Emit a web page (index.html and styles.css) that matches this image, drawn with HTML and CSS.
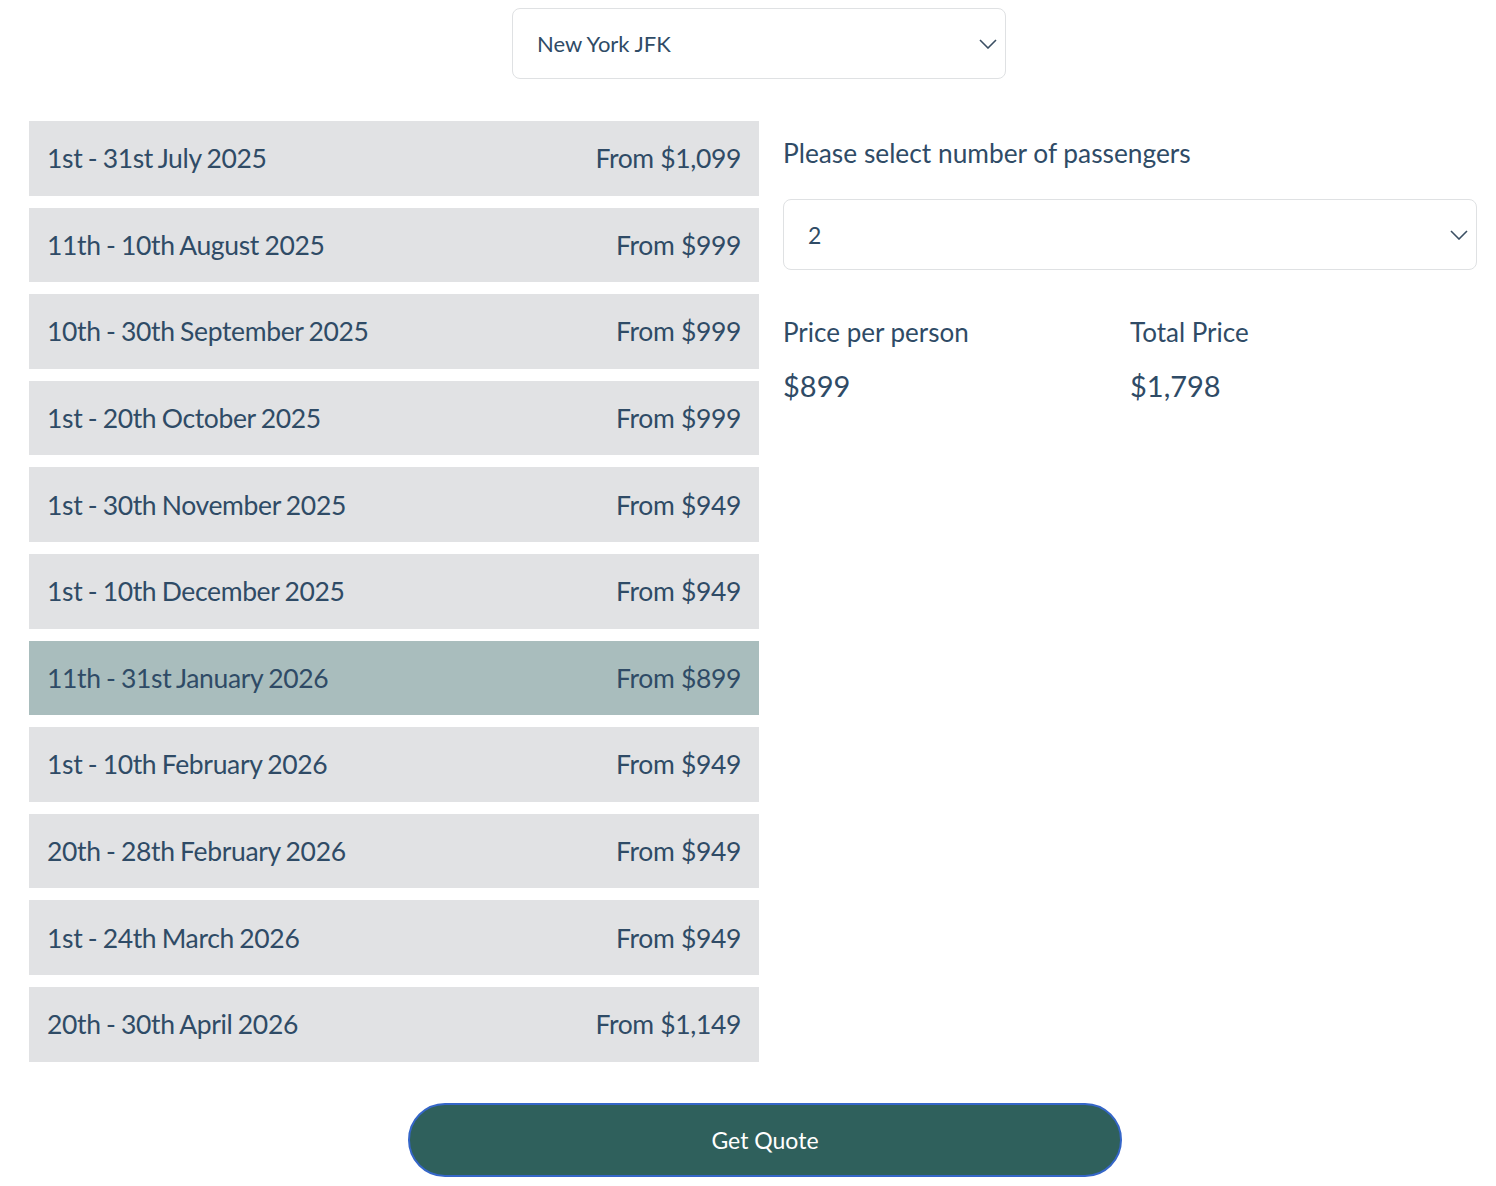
FILE: index.html
```html
<!DOCTYPE html>
<html>
<head>
<meta charset="utf-8">
<link rel="stylesheet" href="styles.css">
</head>
<body>
<div class="page">
  <div class="top">
    <div class="select origin">
      <span>New York JFK</span>
      <svg class="chev" width="18" height="10" viewBox="0 0 18 10"><path d="M1 1 L9 9 L17 1" fill="none" stroke="#3b4f63" stroke-width="1.6"/></svg>
    </div>
  </div>
  <div class="main">
    <div class="dates">
      <div class="row"><span>1st - 31st July 2025</span><span>From $1,099</span></div>
      <div class="row"><span>11th - 10th August 2025</span><span>From $999</span></div>
      <div class="row"><span>10th - 30th September 2025</span><span>From $999</span></div>
      <div class="row"><span>1st - 20th October 2025</span><span>From $999</span></div>
      <div class="row"><span>1st - 30th November 2025</span><span>From $949</span></div>
      <div class="row"><span>1st - 10th December 2025</span><span>From $949</span></div>
      <div class="row active"><span>11th - 31st January 2026</span><span>From $899</span></div>
      <div class="row"><span>1st - 10th February 2026</span><span>From $949</span></div>
      <div class="row"><span>20th - 28th February 2026</span><span>From $949</span></div>
      <div class="row"><span>1st - 24th March 2026</span><span>From $949</span></div>
      <div class="row"><span>20th - 30th April 2026</span><span>From $1,149</span></div>
    </div>
    <div class="side">
      <div class="label">Please select number of passengers</div>
      <div class="select pax">
        <span>2</span>
        <svg class="chev" width="18" height="10" viewBox="0 0 18 10"><path d="M1 1 L9 9 L17 1" fill="none" stroke="#3b4f63" stroke-width="1.6"/></svg>
      </div>
      <div class="prices">
        <div class="pcol">
          <div class="plabel">Price per person</div>
          <div class="pval">$899</div>
        </div>
        <div class="pcol">
          <div class="plabel">Total Price</div>
          <div class="pval">$1,798</div>
        </div>
      </div>
    </div>
  </div>
  <div class="bottom">
    <button class="quote">Get Quote</button>
  </div>
</div>
</body>
</html>
```
FILE: styles.css
```css
* { box-sizing: border-box; }
body {
  margin: 0;
  background: #fff;
  color: #2f4b66;
  font-family: Lato, "Noto Sans", sans-serif;
}
.page {
  width: 1496px;
  padding: 8px 19px 0 29px;
}
.top {
  display: flex;
  padding-left: 483px;
}
.select {
  display: flex;
  align-items: center;
  justify-content: space-between;
  border: 1px solid #dfe1e3;
  border-radius: 8px;
  background: #fff;
  height: 71px;
}
.origin {
  width: 494px;
  padding: 0 8px 0 24px;
  font-size: 22px;
}
.main {
  display: flex;
  gap: 24px;
  margin-top: 42px;
}
.dates {
  width: 730px;
  display: flex;
  flex-direction: column;
  gap: 12px;
}
.row {
  height: 74.6px;
  background: #e1e2e4;
  display: flex;
  align-items: center;
  justify-content: space-between;
  padding: 0 18px;
  font-size: 26.5px;
  letter-spacing: -0.35px;
}
.row span:first-child { word-spacing: -1px; }
.row.active { background: #a9bdbd; }
.side {
  flex: 1;
  padding-top: 14px;
}
.label {
  font-size: 26.3px;
  height: 36px;
  line-height: 36px;
}
.pax {
  margin-top: 28px;
  padding: 0 8px 0 24px;
  font-size: 23px;
}
.prices {
  display: flex;
  margin-top: 44px;
}
.pcol { width: 347px; }
.plabel {
  font-size: 26px;
  line-height: 36px;
}
.pval {
  font-size: 29px;
  line-height: 40px;
  margin-top: 16px;
}
.bottom {
  padding-left: 379px;
  margin-top: 41px;
}
.quote {
  width: 714px;
  height: 74px;
  border: 2px solid #3566c8;
  border-radius: 37px;
  background: #2f605c;
  color: #fff;
  font-family: Lato, sans-serif;
  font-size: 23px;
}
```
